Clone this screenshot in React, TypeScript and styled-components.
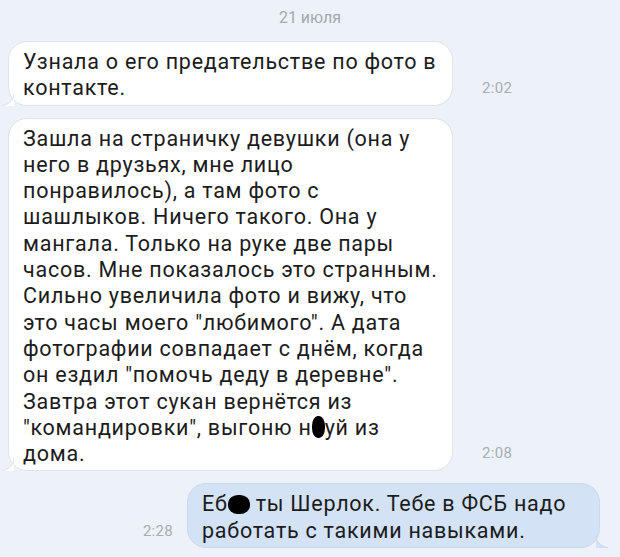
import styled, { createGlobalStyle } from "styled-components";

const GlobalStyle = createGlobalStyle`
  html, body {
    margin: 0;
    padding: 0;
    background: #edf1f8;
  }
  body {
    font-family: Roboto, "Noto Sans", sans-serif;
  }
`;

const Chat = styled.div`
  width: 620px;
  height: 557px;
  overflow: hidden;
  background: #edf1f8;
  display: flex;
  flex-direction: column;
  box-sizing: border-box;
`;

const DateLabel = styled.div`
  text-align: center;
  color: #a3a9b2;
  font-size: 16px;
  line-height: 20px;
  padding-top: 8px;
  margin-bottom: 13px;
`;

const Row = styled.div<{ $out?: boolean }>`
  display: flex;
  align-items: flex-end;
  flex-direction: ${(p) => (p.$out ? "row-reverse" : "row")};
  padding: ${(p) => (p.$out ? "0 20px 0 0" : "0 0 0 8px")};
  margin-bottom: 12px;
`;

const Bubble = styled.div<{ $out?: boolean; $w: number }>`
  position: relative;
  width: ${(p) => p.$w}px;
  box-sizing: border-box;
  padding: 7px 10px 3px 14px;
  border-radius: 19px;
  background: ${(p) => (p.$out ? "#d4e2f6" : "#ffffff")};
  border: 1px solid ${(p) => (p.$out ? "#cbd9ee" : "#dfe3ea")};
  color: #1c1c1c;
  font-size: 21.5px;
  letter-spacing: 0.75px;
  line-height: 26.3px;
  white-space: nowrap;
`;

const Tail = styled.svg<{ $out?: boolean }>`
  position: absolute;
  bottom: -1px;
  width: 12px;
  height: 14px;
  ${(p) => (p.$out ? "right: -9px;" : "left: -7px; transform: scaleX(-1);")}
`;

const Time = styled.div<{ $out?: boolean }>`
  color: #a7adb5;
  font-size: 15px;
  letter-spacing: 0.3px;
  line-height: 16px;
  margin: ${(p) => (p.$out ? "0 14px 9px 0" : "0 0 10px 29px")};
`;

const Blot = styled.span<{ $w: number; $h: number }>`
  display: inline-block;
  width: ${(p) => p.$w}px;
  height: ${(p) => p.$h}px;
  background: #000;
  border-radius: 45%;
  vertical-align: -3px;
`;

const TailShape = ({ out, fill, stroke }: { out?: boolean; fill: string; stroke: string }) => (
  <Tail $out={out} viewBox="0 0 12 14">
    <path d="M0 0 C0 7 2 11 12 14 L0 14 Z" fill={fill} />
    <path d="M0 0 C0 7 2 11 12 14" fill="none" stroke={stroke} strokeWidth="1" />
  </Tail>
);

const lines2 = [
  "Зашла на страничку девушки (она у",
  "него в друзьях, мне лицо",
  "понравилось), а там фото с",
  "шашлыков. Ничего такого. Она у",
  "мангала. Только на руке две пары",
  "часов. Мне показалось это странным.",
  "Сильно увеличила фото и вижу, что",
  "это часы моего \"любимого\". А дата",
  "фотографии совпадает с днём, когда",
  "он ездил \"помочь деду в деревне\".",
  "Завтра этот сукан вернётся из",
];

export default function App() {
  return (
    <Chat>
      <GlobalStyle />
      <DateLabel>21 июля</DateLabel>

      <Row>
        <Bubble $w={445}>
          Узнала о его предательстве по фото в
          <br />
          контакте.
          <TailShape fill="#ffffff" stroke="#dfe3ea" />
        </Bubble>
        <Time>2:02</Time>
      </Row>

      <Row>
        <Bubble $w={445}>
          {lines2.map((l) => (
            <div key={l}>{l}</div>
          ))}
          <div>
            "командировки", выгоню н<Blot $w={13} $h={22} />уй из
          </div>
          <div>дома.</div>
          <TailShape fill="#ffffff" stroke="#dfe3ea" />
        </Bubble>
        <Time>2:08</Time>
      </Row>

      <Row $out>
        <Bubble $out $w={413}>
          Еб<Blot $w={22} $h={19} /> ты Шерлок. Тебе в ФСБ надо
          <br />
          работать с такими навыками.
          <TailShape out fill="#d4e2f6" stroke="#cbd9ee" />
        </Bubble>
        <Time $out>2:28</Time>
      </Row>
    </Chat>
  );
}
